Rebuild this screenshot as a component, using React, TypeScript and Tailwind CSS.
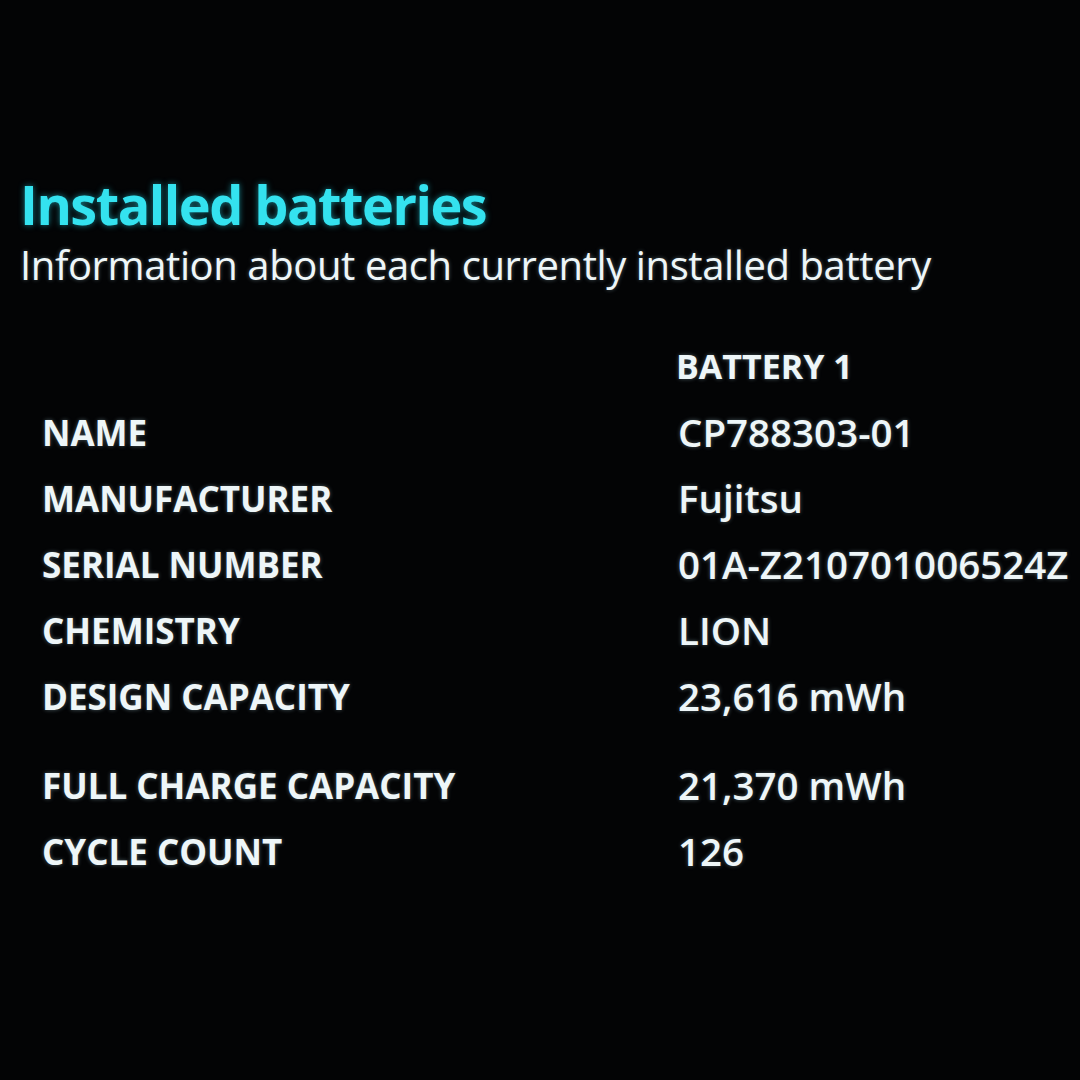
const rows: { label: string; value: string; gapBefore?: boolean }[] = [
  { label: 'NAME', value: 'CP788303-01' },
  { label: 'MANUFACTURER', value: 'Fujitsu' },
  { label: 'SERIAL NUMBER', value: '01A-Z210701006524Z' },
  { label: 'CHEMISTRY', value: 'LION' },
  { label: 'DESIGN CAPACITY', value: '23,616 mWh' },
  { label: 'FULL CHARGE CAPACITY', value: '21,370 mWh', gapBefore: true },
  { label: 'CYCLE COUNT', value: '126' },
];

export default function App() {
  return (
    <div className="w-[1080px] h-[1080px] overflow-hidden bg-[#030405] font-['Open_Sans','Noto_Sans',sans-serif] text-[#eef6f8] [text-shadow:0_0_4px_rgba(200,240,255,0.35)]">
      <div className="pt-[170px] pl-[20px]">
        <h1 className="text-[54px] leading-[68px] font-bold text-[#34e2ef] tracking-[-1.5px] [text-shadow:0_0_6px_rgba(40,220,240,0.55)]">
          Installed batteries
        </h1>
        <p className="text-[40px] leading-[54px] tracking-[-0.4px]">
          Information about each currently installed battery
        </p>
      </div>

      <div className="mt-[41px] pl-[42px]">
        <div className="grid grid-cols-[636px_1fr] h-[66px] items-center">
          <div />
          <div className="text-[34px] font-bold leading-none -ml-[2px]">BATTERY 1</div>
        </div>
        {rows.map((r) => (
          <div
            key={r.label}
            className={`grid grid-cols-[636px_1fr] h-[66px] items-center ${r.gapBefore ? 'mt-[23px]' : ''}`}
          >
            <div className="text-[35px] font-bold leading-none">{r.label}</div>
            <div className="text-[38.5px] font-semibold leading-none">{r.value}</div>
          </div>
        ))}
      </div>
    </div>
  );
}
